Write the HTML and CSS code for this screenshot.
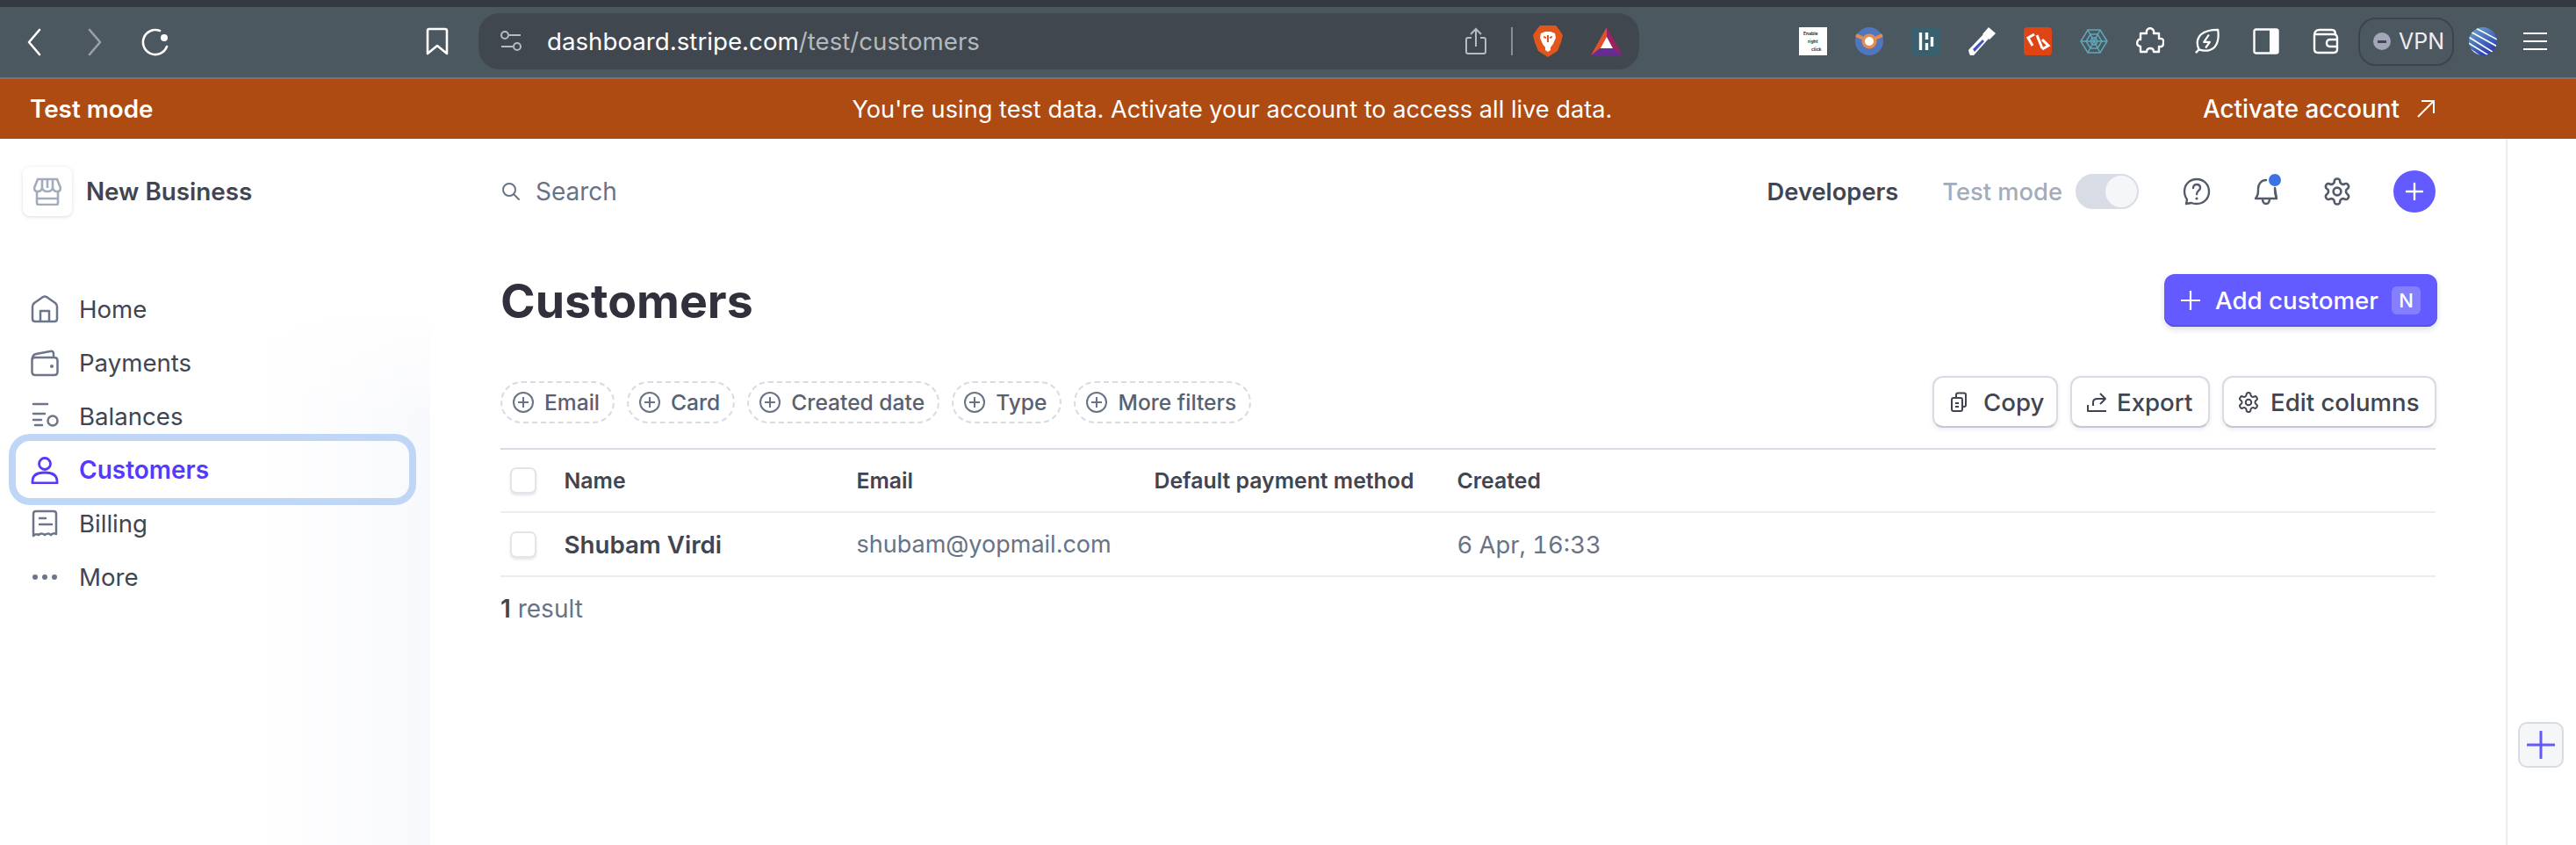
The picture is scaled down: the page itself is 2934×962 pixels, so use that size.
FILE: index.html
```html
<!DOCTYPE html>
<html lang="en">
<head>
<meta charset="utf-8">
<title>Customers</title>
<link rel="stylesheet" href="styles.css">
</head>
<body>
<svg class="sprite" aria-hidden="true">
  <symbol id="gearshape" viewBox="1 1 22 22"><path d="M12.22 2h-.44a2 2 0 0 0-2 2v.18a2 2 0 0 1-1 1.73l-.43.25a2 2 0 0 1-2 0l-.15-.08a2 2 0 0 0-2.73.73l-.22.38a2 2 0 0 0 .73 2.73l.15.1a2 2 0 0 1 1 1.72v.51a2 2 0 0 1-1 1.74l-.15.09a2 2 0 0 0-.73 2.73l.22.38a2 2 0 0 0 2.73.73l.15-.08a2 2 0 0 1 2 0l.43.25a2 2 0 0 1 1 1.73V20a2 2 0 0 0 2 2h.44a2 2 0 0 0 2-2v-.18a2 2 0 0 1 1-1.73l.43-.25a2 2 0 0 1 2 0l.15.08a2 2 0 0 0 2.73-.73l.22-.39a2 2 0 0 0-.73-2.73l-.15-.08a2 2 0 0 1-1-1.74v-.5a2 2 0 0 1 1-1.74l.15-.09a2 2 0 0 0 .73-2.73l-.22-.38a2 2 0 0 0-2.73-.73l-.15.08a2 2 0 0 1-2 0l-.43-.25a2 2 0 0 1-1-1.73V4a2 2 0 0 0-2-2z" fill="none" stroke="currentColor" stroke-width="1.8"/><circle cx="12" cy="12" r="3" fill="none" stroke="currentColor" stroke-width="1.8"/></symbol>
  <symbol id="plusc" viewBox="0 0 24 24"><circle cx="12" cy="12" r="11" fill="none" stroke="#687385" stroke-width="2"/><path d="M12 6 V18 M6 12 H18" stroke="#687385" stroke-width="2"/></symbol>
</svg>
<header class="chrome">
  <div class="toolbar">
    <div class="nav-btns">
      <svg class="ic32" viewBox="0 0 32 32"><path class="w" d="M22 3 L10 17 L22 31"/></svg>
      <svg class="ic32" viewBox="0 0 32 32"><path class="g" d="M10 3 L22 17 L10 31"/></svg>
      <svg class="ic32" viewBox="0 0 32 32"><path class="w" d="M21 4 A14 14 0 1 0 29 22"/><circle cx="26" cy="12" r="4" fill="#fff"/></svg>
    </div>
    <svg class="ic32 bookmark" viewBox="0 0 32 32"><path class="w" d="M7 2 H25 Q27 2 27 4 V30 L16 21 L5 30 V4 Q5 2 7 2Z"/></svg>
    <div class="urlbar">
      <svg class="url-tune" viewBox="0 0 26 26"><circle class="gs" cx="6" cy="6" r="4"/><path class="gs" d="M11 6 H24 M2 19 H15"/><circle class="gs" cx="20" cy="19" r="4"/></svg>
      <div class="url-text">dashboard.stripe.com<span class="url-dim">/test/customers</span></div>
      <svg class="share" viewBox="0 0 26 32"><path class="gs" d="M8 12 H4 Q2 12 2 14 V28 Q2 30 4 30 H22 Q24 30 24 28 V14 Q24 12 22 12 H18 M13 22 V2 M7 8 L13 2 L19 8"/></svg>
      <span class="url-sep"></span>
      <svg class="lion" viewBox="0 0 34 36"><path fill="#e2561c" d="M8 0 H26 L30 5 L34 11 L32 19 L28 29 L17 36 L6 29 L2 19 L0 11 L4 5Z"/><path fill="#fff" d="M9 9 L14 7 H20 L25 9 L26 14 L23 21 L20 25 V28 L17 30 L14 28 V25 L11 21 L8 14Z"/><path fill="#e2561c" d="M12 12 L15 13 L15 15 L12 14Z M22 12 L19 13 L19 15 L22 14Z M16 11 H18 V19 H16Z"/></svg>
      <svg class="bat" viewBox="0 0 38 32"><path fill="#9e1f63" d="M19 0 L37 32 H19Z"/><path fill="#e0522b" d="M19 0 L1 32 H19Z"/><path fill="#662d91" d="M1 32 L11 24 H27 L37 32Z"/><path fill="#fff" d="M19 11 L26 24 H12Z"/></svg>
    </div>
    <div class="exts">
      <div class="ext-right"><span>Enable</span><span class="mid">right</span><span class="end">click</span></div>
      <svg class="ic32" viewBox="0 0 32 32"><circle cx="16" cy="16" r="16" fill="#5276bd"/><path d="M1 9 L12 14 M31 9 L20 14" stroke="#e48d4e" stroke-width="4"/><circle cx="16" cy="16" r="8.5" fill="#e48d4e"/><circle cx="16" cy="16" r="5" fill="#fff"/></svg>
      <svg class="ic32" viewBox="0 0 32 32"><rect width="32" height="32" rx="4" fill="#38606f"/><path d="M10.5 6 V26 M17.500 6 V14 M17.500 18 V26 M23.500 11 V22" stroke="#fff" stroke-width="3.4"/></svg>
      <svg class="ic32" viewBox="0 0 32 32"><path d="M2 30 L1 26 L18 8 L24 13 L7 32 L3 32Z" fill="#fff"/><path d="M6 25 L17 14 L19 16 L8 28Z" fill="#3e55bd"/><path d="M17 8 L24 0 L32 7 L25 14Z" fill="#fff"/></svg>
      <svg class="ic32" viewBox="0 0 32 32"><rect width="32" height="32" rx="4" fill="#e04414"/><path d="M12 8 L5 12 L10 21 M15 9 L21 24 M21 14 L28 21 L21 25" fill="none" stroke="#fff" stroke-width="3"/></svg>
      <svg class="ic32" viewBox="0 0 32 32"><g fill="none" stroke="#5fa6ba" stroke-width="1.5"><path d="M9 3 H23 L31 16 L23 29 H9 L1 16Z"/><path d="M12 8 H20 L25 16 L20 24 H12 L7 16Z"/><path d="M14 12 H18 L20 16 L18 20 H14 L12 16Z"/><path d="M9 3 L23 29 M23 3 L9 29 M1 16 H31"/></g></svg>
      <svg class="ic32" viewBox="0 0 32 32"><path class="w2" d="M12 7 Q11 2 16 1 Q21 2 20 7 H26 V13 Q32 12 31 18 Q31 23 26 22 V28 H20 Q20 24 16 24 Q12 24 12 28 H5 V22 Q1 21 1 18 Q2 13 5 14 V7Z"/></svg>
      <svg class="ic30 leaf" viewBox="0 0 30 32"><path class="w2" d="M1 30 L5 26 Q0 16 7 8 Q14 2 28 2 Q30 16 24 23 Q16 30 5 26 M17 8 L11 17 H18 L13 24"/></svg>
      <svg class="ic30 sidebar" viewBox="0 0 30 30"><rect class="w2" x="1.5" y="1.5" width="27" height="27" rx="2"/><rect x="19" y="1.5" width="9.5" height="27" fill="#fff"/></svg>
      <svg class="ic30 wallet" viewBox="0 0 30 30"><path class="w2" d="M2 8 Q2 2 8 2 H22 Q26 2 26 7 M2 8 V24 Q2 28 6 28 H24 Q28 28 28 24 V11 Q28 7 24 7 H3 M28 13 H20 Q16 13 16 17 Q16 21 20 21 H28"/></svg>
      <div class="vpn"><span class="vpn-dot"><span class="vpn-minus"></span></span>VPN</div>
      <svg class="ic32 globe" viewBox="0 0 32 32"><defs><clipPath id="globeclip"><circle cx="16" cy="16" r="16"/></clipPath><linearGradient id="globefill" x1="0" y1="0" x2="0.6" y2="1"><stop offset="0" stop-color="#6fa8c6"/><stop offset="1" stop-color="#2a3fb0"/></linearGradient></defs><circle cx="16" cy="16" r="16" fill="url(#globefill)"/><g clip-path="url(#globeclip)" stroke="#fff" stroke-width="1.6"><path d="M6 0 L36 16 M0 4 L36 24 M-2 10 L30 30 M-2 17 L24 33 M0 24 L14 34"/></g></svg>
      <div class="burger"><span></span><span></span><span></span></div>
    </div>
  </div>
  <div class="banner">
    <span class="banner-left">Test mode</span>
    <span class="banner-mid">You're using test data. Activate your account to access all live data.</span>
    <span class="banner-right">Activate account<svg class="banner-arrow" viewBox="0 0 22 22"><path d="M2 20 L20 2 M6 2 H20 V16" fill="none" stroke="#fff" stroke-width="2"/></svg></span>
  </div>
</header>
<div class="app">
  <aside class="sidebar-col">
    <div class="brand">
      <span class="brand-logo"><svg viewBox="0 0 32 32" class="ic32"><g fill="none" stroke="#a3acba" stroke-width="2.6"><path d="M5 2 H27 L31 12 Q31 16 27 16 Q23 16 22 12 Q21 16 16 16 Q11 16 10 12 Q9 16 5 16 Q1 16 1 12Z M10 2 V12 M16 2 V12 M22 2 V12"/><path d="M4 16 V29 Q4 31 6 31 H26 Q28 31 28 29 V16 M4 24 H28"/></g></svg></span>
      <span class="brand-name">New Business</span>
    </div>
    <nav class="nav">
      <a class="nav-item"><svg class="ic32" viewBox="0 0 32 32"><path class="nv" d="M2 13 Q2 11 4 9 L14 2 Q16 1 18 2 L28 9 Q30 11 30 13 V27 Q30 30 27 30 H5 Q2 30 2 27Z M11 30 V18 H21 V30"/></svg>Home</a>
      <a class="nav-item"><svg class="ic32" viewBox="0 0 32 32"><path class="nv" d="M1.5 11 V26 Q1.5 30 5 30 H27 Q30.5 30 30.5 26 V14 Q30.5 10 27 10 H5 Q1.5 10 1.5 13 M2 11 Q2 7 6 6 L22 3 Q26 2 26 6 V10"/><circle cx="24" cy="20" r="2" fill="#6c7688"/></svg>Payments</a>
      <a class="nav-item"><svg class="ic32" viewBox="0 0 32 32"><path class="nv" d="M3 2 H19 M3 13 H16 M3 20 H12 M5 26 H13"/><circle class="nv" cx="25" cy="21" r="5.5"/></svg>Balances</a>
      <a class="nav-item is-active"><svg class="ic32" viewBox="0 0 32 32"><circle class="nv-a" cx="16" cy="9" r="6.5"/><path class="nv-a" d="M2 29 Q2 19 16 19 Q30 19 30 29 V31 H2Z"/></svg>Customers</a>
      <a class="nav-item"><svg class="ic32" viewBox="0 0 32 32"><path class="nv" d="M3 28 V5 Q3 2 6 2 H26 Q29 2 29 5 V28 Q26 26 23 29 Q20 26 16 29 Q12 26 9 29 Q6 27 3 30Z M10 10 H17 M10 17 H24"/></svg>Billing</a>
      <a class="nav-item"><svg class="ic32" viewBox="0 0 32 32"><circle cx="5" cy="16" r="3" fill="#6c7688"/><circle cx="16" cy="16" r="3" fill="#6c7688"/><circle cx="27" cy="16" r="3" fill="#6c7688"/></svg>More</a>
    </nav>
  </aside>
  <main class="main">
    <div class="topbar">
      <svg class="search-ic" viewBox="0 0 24 24"><circle cx="10" cy="10" r="7" class="st"/><path class="st" d="M15 15 L21 21"/></svg>
      <span class="search-text">Search</span>
      <div class="top-right">
        <span class="dev">Developers</span>
        <span class="testmode">Test mode</span>
        <span class="toggle"><span class="knob"></span></span>
        <svg class="ic32 tb-ic help" viewBox="0 0 32 32"><path class="tb" d="M16 2 C8 2 2 8 2 16 C2 20 4 24 5 25 L4 30 L10 29 C12 30 14 30 16 30 C24 30 30 24 30 16 C30 8 24 2 16 2Z M12 12 C12 9 14 8 16 8 C19 8 20 10 20 12 C20 15 16 15 16 19"/><circle cx="16" cy="24" r="1.6" fill="#535b6b"/></svg>
        <span class="bell-wrap">
          <svg class="ic32 tb-ic" viewBox="0 0 32 32"><path class="tb" d="M3 24 C6 20 6 18 6 13 C6 7 10 3 15 3 M25 12 C25 18 25 20 27 24 Z M3 24 H27 M11 24 Q11 30 15 30 Q19 30 19 24"/></svg>
          <span class="bell-dot"></span>
        </span>
        <svg class="ic32 tb-ic gear" viewBox="0 0 32 32"><use href="#gearshape" width="32" height="32"/></svg>
        <span class="round-plus"><svg viewBox="0 0 24 24"><path d="M12 3 V21 M3 12 H21" stroke="#fff" stroke-width="2.4" stroke-linecap="round"/></svg></span>
      </div>
    </div>
    <div class="title-row">
      <h1 class="title">Customers</h1>
      <button class="add-btn"><svg class="add-plus" viewBox="0 0 24 24"><path d="M12 1 V23 M1 12 H23" stroke="#fff" stroke-width="2.2"/></svg>Add customer<span class="key">N</span></button>
    </div>
    <div class="filter-row">
      <div class="pills">
        <span class="pill"><svg class="pl" viewBox="0 0 24 24"><use href="#plusc"/></svg>Email</span>
        <span class="pill"><svg class="pl" viewBox="0 0 24 24"><use href="#plusc"/></svg>Card</span>
        <span class="pill"><svg class="pl" viewBox="0 0 24 24"><use href="#plusc"/></svg>Created date</span>
        <span class="pill"><svg class="pl" viewBox="0 0 24 24"><use href="#plusc"/></svg>Type</span>
        <span class="pill"><svg class="pl" viewBox="0 0 24 24"><use href="#plusc"/></svg>More filters</span>
      </div>
      <div class="actions">
        <button class="btn btn-copy"><svg class="btn-ic" viewBox="0 0 24 24"><path class="bi" d="M9 6 V3.500 Q9 1.500 11 1.500 H18 Q20 1.500 20 3.500 V15 Q20 17 18 17 H16 M6 7 H14 Q16 7 16 9 V20 Q16 22 14 22 H6 Q4 22 4 20 V9 Q4 7 6 7Z M8 13 H12 M8 17 H12"/></svg>Copy</button>
        <button class="btn btn-export"><svg class="btn-ic" viewBox="0 0 24 24"><path class="bi" d="M2 15 V22 H23 M8 16 V12 Q8 8 13 8 H21 M16 2 L22 8 L16 14"/></svg>Export</button>
        <button class="btn btn-edit"><svg class="btn-ic" viewBox="0 0 24 24"><use href="#gearshape" width="24" height="24"/></svg>Edit columns</button>
      </div>
    </div>
    <div class="table">
      <div class="tr thead">
        <span class="cb"></span><span>Name</span><span>Email</span><span>Default payment method</span><span>Created</span>
      </div>
      <div class="tr tbody">
        <span class="cb"></span><span class="strong">Shubam Virdi</span><span class="email">shubam@yopmail.com</span><span></span><span class="date">6 Apr, 16:33</span>
      </div>
    </div>
    <div class="result"><b>1</b> result</div>
  </main>
  <aside class="rail">
    <button class="rail-add"><svg viewBox="0 0 32 32"><path d="M16 1 V31 M1 16 H31" stroke="#635bff" stroke-width="3" stroke-linecap="round"/></svg></button>
  </aside>
</div>
</body>
</html>
```
FILE: styles.css
```css
* { box-sizing: border-box; }
html, body { margin: 0; padding: 0; }
body {
  width: 2934px; height: 962px; overflow: hidden; background: #fff;
  font-family: Inter, "Noto Sans", sans-serif; color: #414552;
}
svg { display: block; flex: none; }
.sprite { width: 0; height: 0; position: absolute; top: 0; left: 0; }
.ic32 { width: 32px; height: 32px; }
.ic30 { width: 30px; height: 30px; }
.w { fill: none; stroke: #fff; stroke-width: 2.6; stroke-linecap: round; stroke-linejoin: round; }
.w2 { fill: none; stroke: #fff; stroke-width: 2.4; stroke-linejoin: round; }
.g { fill: none; stroke: #9aa2a8; stroke-width: 2.6; stroke-linecap: round; stroke-linejoin: round; }
.gs { fill: none; stroke: #b6bbc0; stroke-width: 2; }

.chrome { background: #343a42; padding-top: 8px; }
.toolbar {
  height: 82px; background: #4c5860; border-bottom: 2px solid #6b7883;
  display: flex; align-items: center; padding: 0 0 2px 23px;
}
.nav-btns { display: flex; gap: 37px; }
.nav-btns svg { height: 34px; }
.bookmark { margin-left: 289px; }
.urlbar {
  margin-left: 31px; width: 1322px; height: 64px; border-radius: 24px; background: #40474f;
  display: flex; align-items: center; padding: 0 18px 0 24px;
}
.url-tune { width: 26px; height: 26px; }
.url-text { margin-left: 28px; font-size: 27.7px; color: #fff; line-height: 64px; flex: 1; }
.url-dim { color: #b4b9bd; }
.share { width: 26px; height: 32px; }
.url-sep { width: 2px; height: 32px; background: #8a9096; margin: 0 23px 0 27px; }
.lion { width: 34px; height: 36px; }
.bat { width: 38px; height: 32px; margin-left: 31px; }
.exts { margin-left: 182px; display: flex; align-items: center; gap: 32px; }
.ext-right {
  width: 32px; height: 32px; background: #fff; color: #333; font-size: 5px; font-weight: 700;
  display: flex; flex-direction: column; justify-content: space-around; padding: 3px 2px 3px 5px; line-height: 6px;
}
.ext-right .mid { padding-left: 5px; }
.ext-right .end { padding-left: 9px; }
.leaf { margin-left: 2px; }
.sidebar { margin-left: 5px; }
.wallet { margin-left: 6px; }
.vpn {
  width: 109px; height: 55px; margin-left: -10px; border: 2px solid #3c444b; border-radius: 20px;
  display: flex; align-items: center; padding-left: 15px; gap: 9px; color: #eceeef; font-size: 25px;
}
.vpn-dot { width: 20px; height: 20px; border-radius: 50%; background: #a1a6b9; display: flex; align-items: center; justify-content: center; }
.vpn-minus { width: 10px; height: 3px; background: #40474f; }
.globe { margin-left: -15px; }
.burger { width: 27px; display: flex; flex-direction: column; gap: 7px; margin-left: -2px; }
.burger span { height: 2px; background: #fff; }

.banner {
  height: 68px; background: #ad4b12; color: #fff; font-size: 27.8px;
  display: flex; align-items: center; padding: 0 160px 0 34px;
}
.banner-left { font-weight: 600; }
.banner-mid { font-weight: 400; font-size: 27.2px; margin-left: 796px; }
.banner-right { margin-left: auto; display: flex; align-items: center; gap: 19px; font-weight: 500; }
.banner-arrow { width: 22px; height: 22px; }

.app { display: flex; height: 804px; }
.sidebar-col {
  width: 490px; padding: 32px 24px 0 0;
  background: linear-gradient(#fff 24%, rgba(255,255,255,0) 40%), linear-gradient(90deg, #fff 60%, #f8f9fc 100%);
}
.brand { display: flex; align-items: center; margin-left: 26px; gap: 16px; }
.brand-logo {
  width: 56px; height: 56px; border-radius: 8px; background: #fff;
  box-shadow: 0 1px 4px rgba(60,66,87,.18); display: flex; align-items: center; justify-content: center;
}
.brand-name { font-size: 27.8px; font-weight: 600; color: #414552; }
.nav { margin-top: 75px; display: flex; flex-direction: column; }
.nav-item {
  height: 61px; margin-left: 18px; width: 448px; padding-left: 17px; display: flex; align-items: center; gap: 23px;
  font-size: 27.6px; color: #414552; border-radius: 16px;
}
.nv { fill: none; stroke: #6c7688; stroke-width: 2.5; stroke-linecap: round; stroke-linejoin: round; }
.nv-a { fill: none; stroke: #533afd; stroke-width: 2.8; stroke-linejoin: round; }
.is-active { height: 65px; margin-top: -2px; margin-bottom: -2px; box-shadow: 0 0 0 8px #bfd6f6; color: #533afd; font-size: 28px; font-weight: 600; }

.main { width: 2364px; padding: 0 80px 0 80px; }
.topbar { height: 120px; display: flex; align-items: center; }
.search-ic { width: 24px; height: 24px; }
.st { fill: none; stroke: #687385; stroke-width: 2; stroke-linecap: round; }
.search-text { margin-left: 16px; font-size: 28px; color: #687385; }
.top-right { margin-left: auto; display: flex; align-items: center; }
.dev { font-size: 27.3px; font-weight: 600; color: #414552; }
.testmode { margin-left: 50px; font-size: 27.3px; font-weight: 500; color: #a3acba; }
.toggle { margin-left: 15px; width: 72px; height: 40px; border-radius: 20px; background: #d8dce4; border: 2px solid #d8dce4; display: flex; justify-content: flex-end; }
.knob { width: 36px; height: 36px; border-radius: 50%; background: #f5f6f8; }
.tb { fill: none; stroke: #535b6b; stroke-width: 2.4; stroke-linejoin: round; stroke-linecap: round; }
.tb-ic { color: #535b6b; }
.help { margin-left: 50px; }
.bell-wrap { margin-left: 48px; position: relative; display: block; }
.bell-dot { position: absolute; right: 0; top: -4px; width: 14px; height: 14px; border-radius: 50%; background: #3b74e0; }
.gear { margin-left: 48px; }
.round-plus { margin-left: 48px; width: 48px; height: 48px; border-radius: 50%; background: #635bff; display: flex; align-items: center; justify-content: center; }
.round-plus svg { width: 24px; height: 24px; }

.title-row { margin-top: 34px; height: 60px; display: flex; align-items: center; justify-content: space-between; }
.title { margin: 0; font-size: 53.6px; font-weight: 700; color: #30313d; }
.add-btn {
  width: 311px; height: 60px; margin-right: -2px; border: 0; border-radius: 12px; background: #635bff; color: #fff; padding: 0 19px 0 18px;
  font: 500 27.7px Inter, sans-serif; display: flex; align-items: center;
  box-shadow: 0 3px 6px rgba(60,66,87,.18), inset 0 -2px 0 #5650e8;
}
.add-plus { width: 24px; height: 24px; margin-right: 16px; }
.key { margin-left: auto; width: 33px; height: 32px; border-radius: 6px; background: rgba(255,255,255,.22); font-size: 22px; display: flex; align-items: center; justify-content: center; }

.filter-row { margin-top: 56px; height: 59px; display: flex; align-items: center; justify-content: space-between; }
.pills { display: flex; gap: 14px; }
.pill {
  height: 48px; border: 2px dashed #d8dbe3; border-radius: 24px; padding: 0 15px 0 12px;
  display: flex; align-items: center; gap: 12px; font-size: 24.6px; font-weight: 500; color: #596171;
}
.pl { width: 24px; height: 24px; }
.actions { display: flex; gap: 14px; margin-right: -1px; }
.btn {
  height: 59px; border: 2px solid #d8dbe3; border-bottom-color: #c4c8d0; border-radius: 12px; background: #fff; padding: 0 0 0 16px;
  font: 500 27.6px Inter, sans-serif; color: #414552; display: flex; align-items: center;
  box-shadow: 0 2px 5px rgba(60,66,87,.1);
}
.btn-copy { width: 143px; gap: 16px; }
.btn-export { width: 159px; gap: 11px; }
.btn-edit { width: 244px; gap: 13px; }
.btn-ic { width: 24px; height: 24px; color: #414552; }
.bi { fill: none; stroke: #414552; stroke-width: 2; stroke-linejoin: round; }

.table { margin-top: 23px; border-top: 2px solid #d8dde5; }
.tr { display: grid; grid-template-columns: 72.500px 333px 339px 345px 1fr; align-items: center; border-bottom: 2px solid #ebeef1; }
.thead { height: 72px; font-size: 24.8px; font-weight: 600; color: #414552; }
.tbody { height: 73px; font-size: 27.7px; color: #687385; }
.email { font-size: 27px; }
.date { font-size: 27.4px; font-variant-numeric: tabular-nums; }
.strong { font-weight: 600; color: #414552; }
.cb {
  margin-left: 11px; width: 30px; height: 30px; border-radius: 7px; border: 2px solid #e3e5ea; background: #fff;
  box-shadow: 0 2px 3px rgba(60,66,87,.14);
}
.result { margin-top: 19px; font-size: 28px; line-height: 34px; color: #687385; }
.result b { font-weight: 600; color: #414552; }

.rail { width: 80px; border-left: 2px solid #ebeef1; display: flex; flex-direction: column; justify-content: flex-end; align-items: center; padding: 0 3px 88px 0; }
.rail-add {
  width: 52px; height: 52px; padding: 0; border: 2px solid #d8dbe3; border-radius: 10px; background: #f5f6f8;
  display: flex; align-items: center; justify-content: center;
}
.rail-add svg { width: 32px; height: 32px; }
```
